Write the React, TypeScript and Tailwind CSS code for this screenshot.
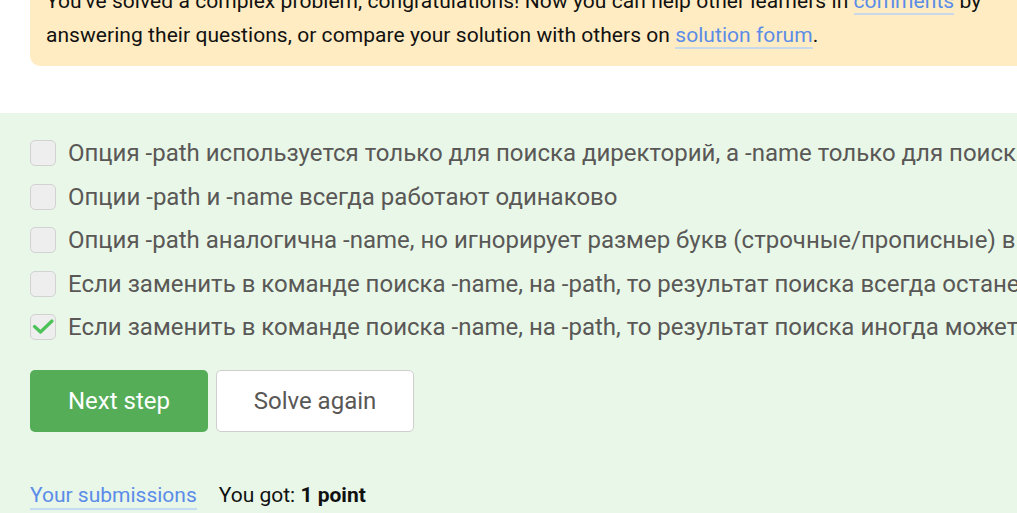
import React from "react";

const options = [
  { text: "Опция -path используется только для поиска директорий, а -name только для поиска файлов", checked: false },
  { text: "Опции -path и -name всегда работают одинаково", checked: false },
  { text: "Опция -path аналогична -name, но игнорирует размер букв (строчные/прописные) в имени файла", checked: false },
  { text: "Если заменить в команде поиска -name, на -path, то результат поиска всегда останется прежним", checked: false },
  { text: "Если заменить в команде поиска -name, на -path, то результат поиска иногда может измениться", checked: true },
];

export default function App() {
  return (
    <div className="w-[1017px] h-[513px] overflow-hidden bg-white font-['Roboto',sans-serif]">
      <div className="pl-[30px] -mt-[31px]">
        <div className="bg-[#ffecc2] rounded-l-[10px] pl-[16px] pt-[15px] pb-[14px] text-[21px] leading-[34px] text-[#111] whitespace-nowrap tracking-[0.05px]">
          You've solved a complex problem, congratulations! Now you can help other learners in{" "}
          <span className="text-[#5b8ce8] border-b-2 border-[#c9d9ea]">comments</span> by
          <br />
          answering their questions, or compare your solution with others on{" "}
          <span className="text-[#5b8ce8] border-b-2 border-[#c9d9ea]">solution forum</span>.
        </div>
      </div>
      <div className="mt-[47px] bg-[#e8f7e8] h-[500px] pl-[30px] pt-[27px]">
        <div className="flex flex-col gap-[17.5px]">
          {options.map((o, i) => (
            <div key={i} className="flex items-center gap-[12px] h-[26px] whitespace-nowrap">
              <div className="w-[26px] h-[26px] shrink-0 rounded-[5px] border border-[#d2d2d2] bg-[#eeeeee] flex items-center justify-center">
                {o.checked && (
                  <svg width="24" height="24" viewBox="0 0 24 24">
                    <path d="M3.5 11.5 L9.5 17 L21 6" fill="none" stroke="#4cc258" strokeWidth="3.2" strokeLinecap="round" strokeLinejoin="round" />
                  </svg>
                )}
              </div>
              <span className="text-[24px] text-[#5a5856] leading-[26px]">{o.text}</span>
            </div>
          ))}
        </div>
        <div className="flex gap-[8px] mt-[30px]">
          <button className="w-[178px] h-[62px] rounded-[5px] bg-[#55ad57] text-white text-[24px]">Next step</button>
          <button className="w-[198px] h-[62px] rounded-[5px] bg-white border border-[#cfcfcf] text-[#5a5856] text-[24px]">Solve again</button>
        </div>
        <div className="flex items-baseline mt-[50px] text-[21px] leading-[26px]">
          <span className="text-[#5b8ce8] border-b-2 border-[#c4dcf2]">Your submissions</span>
          <span className="ml-[22px] text-[#111]">You got: <b className="font-bold">1 point</b></span>
        </div>
      </div>
    </div>
  );
}
